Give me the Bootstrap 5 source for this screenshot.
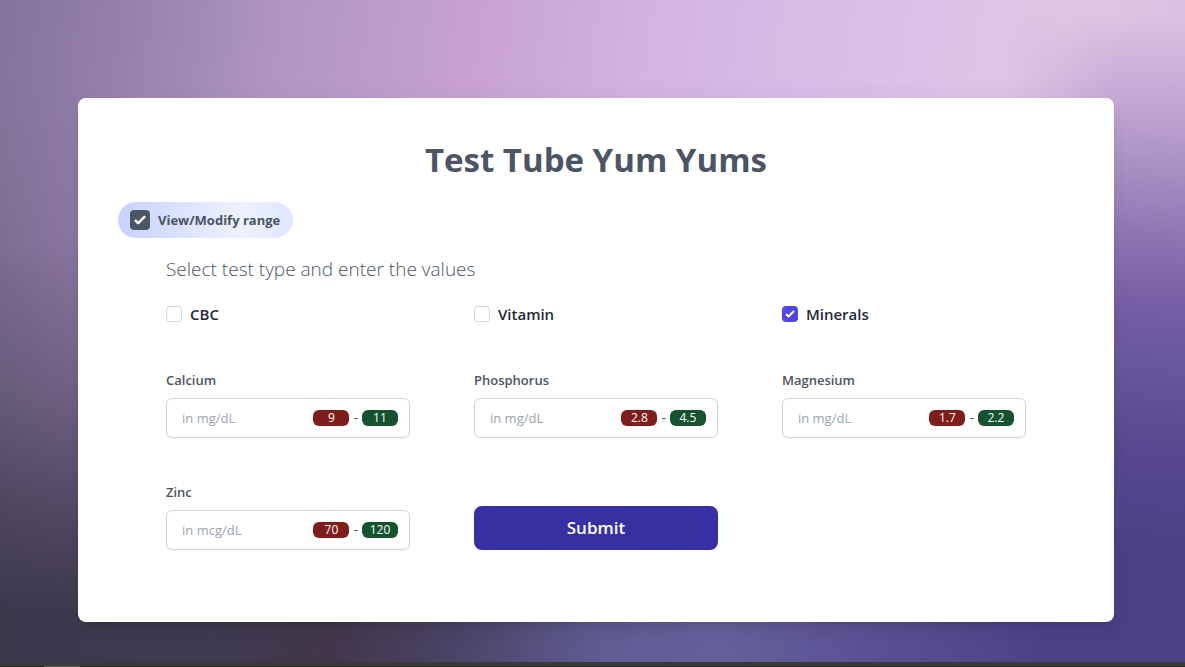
<!DOCTYPE html>
<html lang="en">
<head>
<meta charset="utf-8">
<meta name="viewport" content="width=device-width, initial-scale=1">
<title>Test Tube Yum Yums</title>
<link href="https://cdn.jsdelivr.net/npm/bootstrap@5.3.0/dist/css/bootstrap.min.css" rel="stylesheet">
<style>
  body {
    font-family: "Open Sans", "Noto Sans", sans-serif;
    font-size: 14px;
    line-height: 20px;
    color: #4b5563;
  }
  .backdrop {
    position: relative;
    isolation: isolate;
    overflow: hidden;
    padding: 98px 6% 40px 78px;
    background: linear-gradient(90deg, #7b6c91 0%, #8b749f 7%, #9a82b8 50%, #9c7fbc 94%, #866db0 100%);
  }
  .backdrop::before, .backdrop::after {
    content: "";
    position: absolute;
    inset: 0;
    z-index: -1;
  }
  /* pale light falling from the top edge */
  .backdrop::before {
    background: linear-gradient(98deg, #83739b 0%, #9680ab 10%, #b095c2 22%, #c5a0d0 36%, #d3b0e0 50%, #d6bce7 62%, #dcc2e8 73%, #e1c6e4 84%, #dcc0e2 93%, #cfaedb 100%);
    -webkit-mask-image: linear-gradient(#000 12%, transparent 42%);
    mask-image: linear-gradient(#000 12%, transparent 42%);
  }
  /* dark violet rising from the bottom edge */
  .backdrop::after {
    background: linear-gradient(90deg, #3c384c 0%, #3f3a50 18%, #42364b 28%, #4b4568 39%, #605c94 51%, #65609b 61%, #584e91 75%, #4d4085 90%, #4b3d82 100%);
    -webkit-mask-image: linear-gradient(transparent 38%, rgba(0,0,0,.3) 58%, rgba(0,0,0,.7) 76%, #000 92%);
    mask-image: linear-gradient(transparent 38%, rgba(0,0,0,.3) 58%, rgba(0,0,0,.7) 76%, #000 92%);
  }
  /* violet falloff along the right edge */
  .right-glow {
    position: absolute;
    inset: 0 0 0 85%;
    z-index: 0;
    background: linear-gradient(184deg, rgba(208,176,220,0) 3%, #c2a5d4 16%, #a68ec2 26%, #8e76b4 35%, #785fa5 45%, #67579b 54%, #57488f 67%, #4c4085 82%);
    -webkit-mask-image: linear-gradient(90deg, transparent, #000 60%);
    mask-image: linear-gradient(90deg, transparent, #000 60%);
  }
  .panel {
    position: relative;
    border-radius: 8px;
    padding: 40px 40px 72px;
    box-shadow: 0 10px 15px -3px rgba(0,0,0,.1), 0 4px 6px -4px rgba(0,0,0,.1);
  }
  .panel-title { font-size: 33px; line-height: 44px; color: #4b5563; }
  .range-toggle {
    height: 36px;
    padding: 0 13px 0 12px;
    gap: 8px;
    background: linear-gradient(90deg, #c7d2fe 0%, #eef2ff 70%, #e0e7ff 100%);
  }
  .range-toggle label { font-size: 13px; }
  .form-check-input {
    border: 1px solid #d1d5db;
    border-radius: 4px;
    width: 16px;
    height: 16px;
  }
  .form-check-input:checked {
    background-color: #4f46e5;
    border-color: #4f46e5;
    background-size: 16px;
    background-image: url("data:image/svg+xml,%3csvg viewBox='0 0 16 16' fill='white' xmlns='http://www.w3.org/2000/svg'%3e%3cpath d='M12.2 4.8a1 1 0 010 1.4l-5 5a1 1 0 01-1.4 0l-2-2a1 1 0 011.4-1.4L6.5 9.1l4.3-4.3a1 1 0 011.4 0z'/%3e%3c/svg%3e");
  }
  .range-toggle .form-check-input { width: 20px; height: 20px; background-size: 20px; background-color: #4b5563; border-color: #4b5563; }
  .fields { padding: 0 48px; }
  .lead-in { font-size: 19px; line-height: 28px; font-weight: 300; margin: 17px 0 19px; }
  .field-grid { display: grid; grid-template-columns: repeat(3, minmax(0, 1fr)); column-gap: 64px; row-gap: 44px; }
  .type-name { font-size: 15px; line-height: 24px; color: #1f2937; }
  .field-name { font-size: 13px; line-height: 20px; margin-bottom: 8px; }
  .value-box { height: 40px; padding: 0 11px 0 15px; border: 1px solid #d1d5db; border-radius: 6px; gap: 4px; box-shadow: 0 1px 2px rgba(0,0,0,.05); }
  .value-box input { border: 0; padding: 0; outline: 0; }
  .value-entry { min-width: 0; font-size: 13px; background: transparent; }
  .value-entry::placeholder { color: #9ca3af; opacity: 1; }
  .limit { width: 36px; height: 16px; font-size: 12px; line-height: 16px; border-radius: 6px; color: #fff; text-align: center; flex: none; }
  .limit-low { background: #7f1d1d; }
  .limit-high { background: #14532d; }
  .submit-btn { height: 44px; border-radius: 8px; font-size: 17px; line-height: 28px; background: #3730a3; color: #fff; padding: 0; }
  .submit-btn:hover { background: #312e81; color: #fff; }
  .base-strip { height: 5px; background: linear-gradient(#3a3a38 4px, #1e1e1e 4px); }
  .base-strip span { width: 36px; height: 1px; margin-left: 44px; background: #5a5a5a; }
  @media (max-width: 767px) {
    .backdrop { padding: 24px 16px; }
    .panel { padding: 24px; }
    .fields { padding: 0; }
    .field-grid { grid-template-columns: minmax(0, 1fr); row-gap: 20px; }
  }
</style>
</head>
<body class="d-flex flex-column min-vh-100">
<main class="backdrop flex-grow-1">
  <div class="right-glow"></div>
  <form class="panel bg-white">
    <h1 class="panel-title text-center fw-bold mb-3">Test Tube Yum Yums</h1>
    <div class="range-toggle d-inline-flex align-items-center rounded-pill mt-1">
      <input class="form-check-input m-0" type="checkbox" id="range" checked>
      <label class="fw-bold" for="range">View/Modify range</label>
    </div>
    <div class="fields">
      <p class="lead-in">Select test type and enter the values</p>
      <div class="field-grid">
        <div class="d-flex align-items-center gap-2"><input class="form-check-input m-0" type="checkbox" id="cbc"><label class="type-name fw-semibold" for="cbc">CBC</label></div>
        <div class="d-flex align-items-center gap-2"><input class="form-check-input m-0" type="checkbox" id="vitamin"><label class="type-name fw-semibold" for="vitamin">Vitamin</label></div>
        <div class="d-flex align-items-center gap-2"><input class="form-check-input m-0" type="checkbox" id="minerals" checked><label class="type-name fw-semibold" for="minerals">Minerals</label></div>

        <div>
          <label class="field-name d-block fw-semibold" for="calcium">Calcium</label>
          <div class="value-box d-flex align-items-center">
            <input class="value-entry flex-grow-1" id="calcium" type="text" placeholder="in mg/dL">
            <input class="limit limit-low" type="text" value="9" aria-label="Calcium minimum"><span>-</span><input class="limit limit-high" type="text" value="11" aria-label="Calcium maximum">
          </div>
        </div>
        <div>
          <label class="field-name d-block fw-semibold" for="phosphorus">Phosphorus</label>
          <div class="value-box d-flex align-items-center">
            <input class="value-entry flex-grow-1" id="phosphorus" type="text" placeholder="in mg/dL">
            <input class="limit limit-low" type="text" value="2.8" aria-label="Phosphorus minimum"><span>-</span><input class="limit limit-high" type="text" value="4.5" aria-label="Phosphorus maximum">
          </div>
        </div>
        <div>
          <label class="field-name d-block fw-semibold" for="magnesium">Magnesium</label>
          <div class="value-box d-flex align-items-center">
            <input class="value-entry flex-grow-1" id="magnesium" type="text" placeholder="in mg/dL">
            <input class="limit limit-low" type="text" value="1.7" aria-label="Magnesium minimum"><span>-</span><input class="limit limit-high" type="text" value="2.2" aria-label="Magnesium maximum">
          </div>
        </div>
        <div>
          <label class="field-name d-block fw-semibold" for="zinc">Zinc</label>
          <div class="value-box d-flex align-items-center">
            <input class="value-entry flex-grow-1" id="zinc" type="text" placeholder="in mcg/dL">
            <input class="limit limit-low" type="text" value="70" aria-label="Zinc minimum"><span>-</span><input class="limit limit-high" type="text" value="120" aria-label="Zinc maximum">
          </div>
        </div>
        <button class="submit-btn btn border-0 fw-semibold align-self-end" type="submit">Submit</button>
      </div>
    </div>
  </form>
</main>
<footer class="base-strip d-flex align-items-end"><span></span></footer>
<script src="https://cdn.jsdelivr.net/npm/bootstrap@5.3.0/dist/js/bootstrap.bundle.min.js"></script>
</body>
</html>
